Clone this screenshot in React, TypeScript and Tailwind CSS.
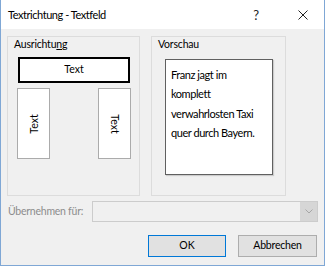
import React from "react";

const font = { fontFamily: 'Lato, "Noto Sans", sans-serif' };

export default function App() {
  return (
    <div
      className="w-[325px] h-[266px] flex flex-col border-x border-b border-[#7fa7d5] bg-[#f0f0f0] text-[#000] overflow-hidden"
      style={font}
    >
      {/* Title bar */}
      <div className="h-[29px] bg-white flex items-center shrink-0">
        <div className="pl-[7px] text-[11px] leading-[16px] tracking-[-0.45px] whitespace-nowrap">Textrichtung - Textfeld</div>
        <div className="ml-auto mr-[39px] text-[13px] leading-[16px] text-[#222]">?</div>
        <div className="mr-[16px] w-[10px] h-[10px]">
          <svg width="10" height="10" viewBox="0 0 10 10">
            <path d="M0.5 0.5 L9.5 9.5 M9.5 0.5 L0.5 9.5" stroke="#222" strokeWidth="1" fill="none" />
          </svg>
        </div>
      </div>

      {/* Body */}
      <div className="flex-1 px-[6px] flex flex-col">
        <div className="mt-[7px] flex h-[160px]">
          {/* Ausrichtung */}
          <div className="w-[133px] h-full border border-[#dcdcdc] flex flex-col">
            <div className="ml-[6px] h-[15px] leading-[15px] text-[10.5px] tracking-[-0.2px] whitespace-nowrap">
              Ausrichtu<span className="underline">n</span>g
            </div>
            <div className="ml-[10px] mt-[5px] w-[112px] h-[26px] border-2 border-black bg-white flex items-center justify-center text-[10.5px]">
              Text
            </div>
            <div className="mt-[5px] flex">
              <div className="ml-[9px] w-[33px] h-[71px] border border-[#ababab] bg-white flex items-center justify-center">
                <div className="-rotate-90 text-[10.5px] leading-[14px]">Text</div>
              </div>
              <div className="ml-[48px] w-[33px] h-[71px] border border-[#ababab] bg-white flex items-center justify-center">
                <div className="rotate-90 text-[10.5px] leading-[14px]">Text</div>
              </div>
            </div>
          </div>

          {/* Vorschau */}
          <div className="ml-[11px] w-[135px] h-full border border-[#dcdcdc] flex flex-col">
            <div className="ml-[6px] h-[15px] leading-[15px] text-[10.5px] tracking-[-0.2px] whitespace-nowrap">Vorschau</div>
            <div className="ml-[13px] mt-[7px] w-[108px] h-[116px] border border-[#606060] bg-white pl-[5px] pt-[5px] text-[11px] leading-[19.3px] tracking-[-0.45px] whitespace-nowrap shadow-[1px_1px_1px_rgba(0,0,0,0.15)]">
              <div>Franz jagt im</div>
              <div>komplett</div>
              <div>verwahrlosten Taxi</div>
              <div>quer durch Bayern.</div>
            </div>
          </div>
        </div>

        {/* Übernehmen für */}
        <div className="mt-[5px] h-[21px] flex items-center">
          <div className="w-[85px] pl-[1px] text-[10.5px] tracking-[-0.25px] whitespace-nowrap text-[#8d8d8d]">Übernehmen für:</div>
          <div className="w-[226px] h-[21px] border border-[#cccccc] bg-[#f0f0f0] flex justify-end">
            <div className="w-[17px] h-full bg-[#d6d6d6] flex items-center justify-center">
              <svg width="8" height="5" viewBox="0 0 8 5">
                <path d="M0.5 0.5 L4 4 L7.5 0.5" stroke="#a6a6a6" strokeWidth="1" fill="none" />
              </svg>
            </div>
          </div>
        </div>

        {/* Buttons */}
        <div className="mt-[13px] flex justify-end pr-[1px]">
          <div className="w-[78px] h-[22px] border border-[#0078d7] bg-[#e1e1e1] flex items-center justify-center text-[10.5px]">
            OK
          </div>
          <div className="ml-[12px] w-[79px] h-[22px] border border-[#adadad] bg-[#e1e1e1] flex items-center justify-center text-[10.5px] tracking-[-0.2px]">
            Abbrechen
          </div>
        </div>
      </div>
    </div>
  );
}
